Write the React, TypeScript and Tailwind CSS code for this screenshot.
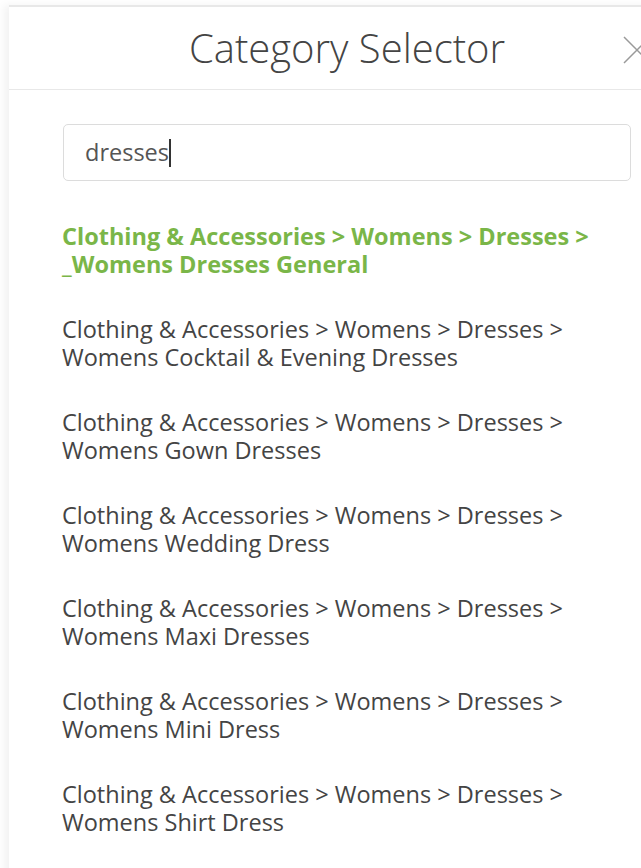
const RESULTS = [
  { path: 'Clothing & Accessories > Womens > Dresses >', leaf: '_Womens Dresses General', active: true },
  { path: 'Clothing & Accessories > Womens > Dresses >', leaf: 'Womens Cocktail & Evening Dresses' },
  { path: 'Clothing & Accessories > Womens > Dresses >', leaf: 'Womens Gown Dresses' },
  { path: 'Clothing & Accessories > Womens > Dresses >', leaf: 'Womens Wedding Dress' },
  { path: 'Clothing & Accessories > Womens > Dresses >', leaf: 'Womens Maxi Dresses' },
  { path: 'Clothing & Accessories > Womens > Dresses >', leaf: 'Womens Mini Dress' },
  { path: 'Clothing & Accessories > Womens > Dresses >', leaf: 'Womens Shirt Dress' },
];

export default function App() {
  return (
    <div
      className="h-[868px] w-[641px] overflow-hidden bg-white"
      style={{ fontFamily: '"Open Sans", "Liberation Sans", sans-serif' }}
    >
      <div className="mt-[5px] ml-[9px] w-[676px] h-[900px] bg-white border-t-2 border-[#e8e8e8] shadow-[-5px_0_8px_rgba(0,0,0,0.05)]">
        <div className="relative h-[83px] border-b border-[#e8e8e8] flex items-center justify-center">
          <h2 className="text-[40px] font-light text-[#444] leading-none">Category Selector</h2>
          {/* close */}
          <button className="absolute left-[614px] top-[29px]">
            <svg width="28" height="28" viewBox="0 0 28 28" fill="none" stroke="#9a9a9a" strokeWidth="1.5">
              <path d="M1 1L27 27M27 1L1 27" />
            </svg>
          </button>
        </div>

        <div className="px-[54px] pt-[34px]">
          <div className="h-[57px] border border-[#dcdcdc] rounded-[5px] flex items-center px-[21px]">
            <span className="text-[23.5px] text-[#555]">dresses</span>
            <span className="w-[2px] h-[28px] bg-[#333]" />
          </div>

          <ul className="mt-[41px] -ml-px flex flex-col gap-[37px]">
            {RESULTS.map((r, i) => (
              <li
                key={i}
                className={
                  r.active
                    ? 'text-[23.5px] leading-[28px] font-bold text-[#7ab648]'
                    : 'text-[23.5px] leading-[28px] text-[#444]'
                }
              >
                <div>{r.path}</div>
                <div>{r.leaf}</div>
              </li>
            ))}
          </ul>
        </div>
      </div>
    </div>
  );
}
